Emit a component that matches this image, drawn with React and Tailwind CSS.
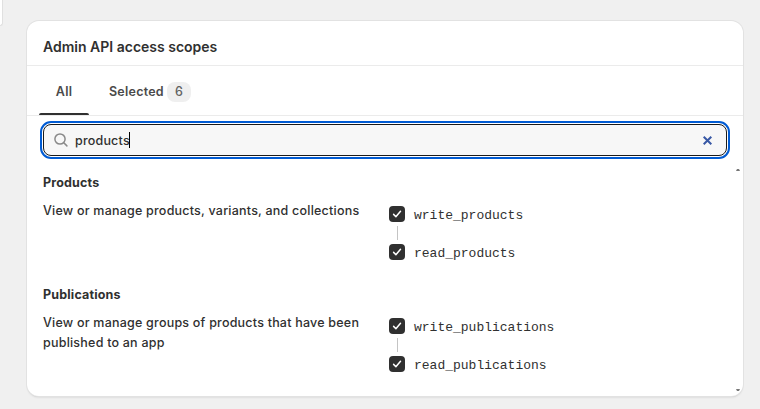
import React from "react";

const groups = [
  {
    title: "Products",
    description: "View or manage products, variants, and collections",
    scopes: ["write_products", "read_products"],
  },
  {
    title: "Publications",
    description: "View or manage groups of products that have been published to an app",
    scopes: ["write_publications", "read_publications"],
  },
];

function Checkbox() {
  return (
    <span className="flex h-4 w-4 shrink-0 items-center justify-center rounded bg-[#303030]">
      <svg viewBox="0 0 16 16" className="h-4 w-4" fill="none" stroke="#fff" strokeWidth="1.5" strokeLinecap="round" strokeLinejoin="round">
        <path d="M4.6 8.4 6.9 10.7 11.5 5.3" />
      </svg>
    </span>
  );
}

function ScopeGroup({ group }) {
  return (
    <section className="h-28">
      <h3 className="text-[12.5px] leading-5 font-[650] tracking-[0.17px]">{group.title}</h3>
      <div className="mt-2 flex">
        <p className="w-[346px] shrink-0 pr-6 text-[12.5px] leading-5 font-[450] tracking-[0.22px]">{group.description}</p>
        <div className="pt-[5px]">
          <div className="flex h-4 items-center gap-[9px]">
            <Checkbox />
            <code className="pt-1 font-['Liberation_Mono',monospace] text-[13px] leading-4">{group.scopes[0]}</code>
          </div>
          <div className="my-1 ml-2 h-3.5 w-px bg-[#c4c4c4]" />
          <div className="flex h-4 items-center gap-[9px]">
            <Checkbox />
            <code className="pt-1 font-['Liberation_Mono',monospace] text-[13px] leading-4">{group.scopes[1]}</code>
          </div>
        </div>
      </div>
    </section>
  );
}

export default function App() {
  return (
    <div className="flex h-[409px] w-[760px] items-start overflow-hidden bg-[#f0f0f0] font-['Inter',sans-serif] text-[#303030]">
      <div className="h-[26px] w-[3px] shrink-0 rounded-br-[3px] border-r border-b border-[#e0e0e0] bg-white" />
      <main className="mt-[21px] ml-6 flex h-[375px] w-[716px] shrink-0 flex-col overflow-hidden rounded-xl bg-white shadow-[0_0_0_1px_#e2e2e2,0_1px_0_0_#c8c8c8,0_2px_2px_0_#00000012]">
        <header className="h-[45px] shrink-0 border-b border-[#ebebeb] px-4 pt-4">
          <h2 className="text-sm leading-5 font-semibold">Admin API access scopes</h2>
        </header>
        <nav className="flex h-[50px] shrink-0 border-b border-[#ebebeb] pl-3 text-[12.5px] font-semibold tracking-[0.24px] text-[#4a4a4a]">
          <div className="flex w-[50px] flex-col items-center justify-between pt-4">
            <span className="leading-5">All</span>
            <span className="h-0.5 w-full rounded-t-sm bg-[#303030]" />
          </div>
          <div className="ml-5 flex h-[51px] items-center gap-[3px]">
            <span className="w-[55px] pt-0.5">Selected</span>
            <span className="flex h-5 w-6 items-center justify-center rounded-lg bg-[#efefef] pt-0.5 font-[550] text-[#616161]">6</span>
          </div>
        </nav>
        <div className="mx-4 mt-2 flex h-8 shrink-0 items-center rounded-lg border border-[#1a1a1a] bg-[#f7f7f7] pr-3.5 pl-[9px] outline-2 outline-offset-1 outline-[#005bd3]">
          <svg viewBox="0 0 16 16" className="h-4 w-4" fill="none" stroke="#8a8a8a" strokeWidth="1.5" strokeLinecap="round">
            <circle cx="7" cy="7" r="5.1" />
            <path d="m10.8 10.8 3.1 3.1" />
          </svg>
          <span className="ml-1.5 w-[54px] pt-0.5 text-[12.5px] leading-5 font-[450] tracking-[0.2px]">products</span>
          <span className="h-4 w-px bg-black" />
          <svg viewBox="0 0 10 10" className="mr-[-1px] ml-auto h-2.5 w-2.5" fill="none" stroke="#3858a5" strokeWidth="2">
            <path d="m0.7 1.7 7.6 7.6M8.3 1.7 0.7 9.3" />
          </svg>
        </div>
        <div className="flex min-h-0 flex-1 justify-between pt-3">
          <div className="pt-[5px] pl-4">
            {groups.map((group) => (
              <ScopeGroup key={group.title} group={group} />
            ))}
          </div>
          <div className="mr-[3px] flex w-1 flex-col justify-between pt-px pb-[5px]">
            <svg viewBox="0 0 4 2" className="h-0.5 w-1 fill-[#777]">
              <path d="M0 2 1 0H3L4 2Z" />
            </svg>
            <svg viewBox="0 0 4 2" className="h-0.5 w-1 fill-[#777]">
              <path d="M0 0 1 2H3L4 0Z" />
            </svg>
          </div>
        </div>
      </main>
    </div>
  );
}
